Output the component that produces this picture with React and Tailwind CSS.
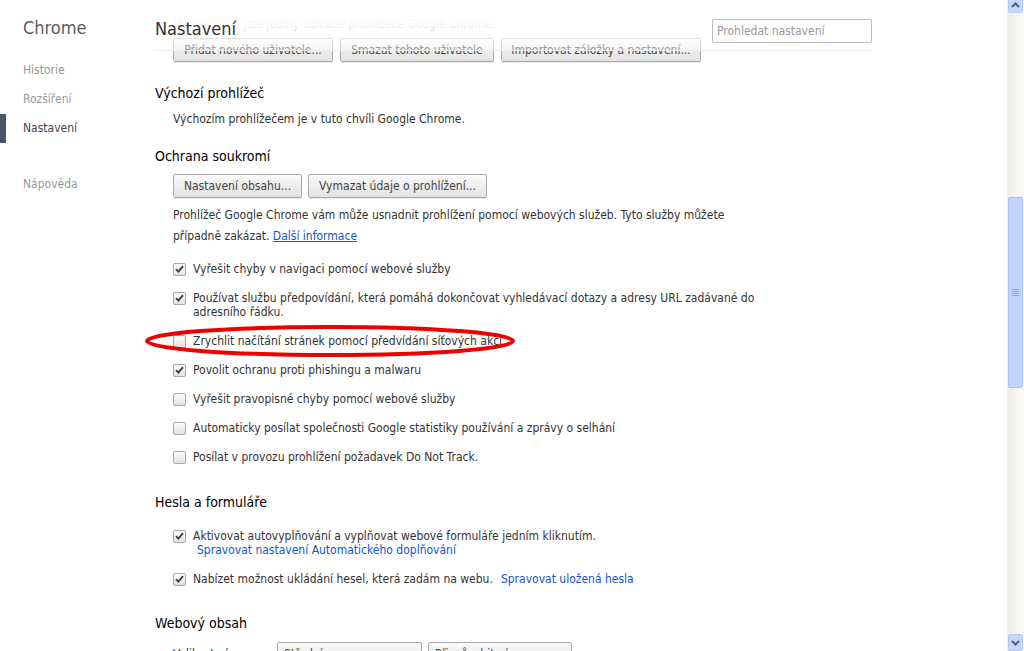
import React from "react";

const font = { fontFamily: '"DejaVu Sans Condensed", "DejaVu Sans", Tahoma, sans-serif' };

function Check({ checked }) {
  return (
    <span className="mt-[1px] flex h-[13px] w-[13px] shrink-0 items-center justify-center rounded-[2px] border border-[#a8a8a8] bg-gradient-to-b from-[#fdfdfd] to-[#e2e2e2]">
      {checked ? (
        <svg width="9" height="8" viewBox="0 0 9 8">
          <path d="M1 4.2 L3.4 6.6 L8 1.2" fill="none" stroke="#3c3c3c" strokeWidth="1.9" />
        </svg>
      ) : null}
    </span>
  );
}

function Btn({ children, className = "" }) {
  return (
    <button className={`h-[24px] whitespace-nowrap rounded-[2px] border border-[#aaaaaa] bg-gradient-to-b from-[#fafafa] to-[#e2e2e2] px-[6px] text-[12px] text-[#444] shadow-[0_1px_0_rgba(0,0,0,0.08)] ${className}`}>
      {children}
    </button>
  );
}

function Row({ checked, children }) {
  return (
    <div className="flex items-start gap-[7px] py-[7.5px] pl-[18px]">
      <Check checked={checked} />
      <div className="w-[570px] text-[12px] leading-[14px] text-[#333]">{children}</div>
    </div>
  );
}

function Heading({ children, className = "" }) {
  return <div className={`h-[20px] text-[14px] leading-[20px] text-[#000] ${className}`}>{children}</div>;
}

export default function App() {
  return (
    <div className="relative flex h-[651px] w-[1024px] overflow-hidden bg-white" style={font}>
      {/* sidebar */}
      <div className="relative w-[155px] shrink-0">
        <div className="pl-[23px] pt-[16px] text-[18px] leading-[24px] text-[#5a5a5a]">Chrome</div>
        <div className="mt-[16px] flex flex-col text-[12px] text-[#999]">
          <div className="h-[29px] pl-[23px] leading-[29px]">Historie</div>
          <div className="h-[29px] pl-[23px] leading-[29px]">Rozšíření</div>
          <div className="relative h-[29px] pl-[23px] leading-[29px] text-[#444]">
            <span className="absolute left-0 top-0 h-[29px] w-[6px] bg-[#4a5565]" />
            Nastavení
          </div>
          <div className="mt-[27px] h-[29px] pl-[23px] leading-[29px]">Nápověda</div>
        </div>
      </div>

      {/* main */}
      <div className="relative flex-1">
        <div className="flex flex-col">
          <div className="pl-[18px] pt-[14px] text-[12px] leading-[20px] text-[#333]">
            Momentálně jste jediný uživatel prohlížeče Google Chrome.
          </div>
          <div className="mt-[4px] flex gap-[7px] pl-[18px]">
            <Btn className="h-[23px] w-[160px]">Přidat nového uživatele...</Btn>
            <Btn className="h-[23px] w-[154px]">Smazat tohoto uživatele</Btn>
            <Btn className="h-[23px] w-[200px]">Importovat záložky a nastavení...</Btn>
          </div>

          <Heading className="mt-[21px]">Výchozí prohlížeč</Heading>
          <div className="mt-[6px] h-[20px] pl-[18px] text-[12px] leading-[20px] text-[#333]">
            Výchozím prohlížečem je v tuto chvíli Google Chrome.
          </div>

          <Heading className="mt-[17px]">Ochrana soukromí</Heading>
          <div className="mt-[8px] flex gap-[6px] pl-[18px]">
            <Btn className="w-[129px]">Nastavení obsahu...</Btn>
            <Btn className="w-[179px]">Vymazat údaje o prohlížení...</Btn>
          </div>
          <div className="mt-[7px] w-[618px] pl-[18px] text-[12px] leading-[21px] text-[#333]">
            Prohlížeč Google Chrome vám může usnadnit prohlížení pomocí webových služeb. Tyto služby můžete
            případně zakázat.{" "}
            <a className="text-[#1155cc] underline">Další informace</a>
          </div>

          <div className="mt-[7px] flex flex-col">
            <Row checked>Vyřešit chyby v navigaci pomocí webové služby</Row>
            <Row checked>
              Používat službu předpovídání, která pomáhá dokončovat vyhledávací dotazy a adresy URL zadávané do
              adresního řádku.
            </Row>
            <Row>Zrychlit načítání stránek pomocí předvídání síťových akcí</Row>
            <Row checked>Povolit ochranu proti phishingu a malwaru</Row>
            <Row>Vyřešit pravopisné chyby pomocí webové služby</Row>
            <Row>Automaticky posílat společnosti Google statistiky používání a zprávy o selhání</Row>
            <Row>Posílat v provozu prohlížení požadavek Do Not Track.</Row>
          </div>

          <Heading className="mt-[21px]">Hesla a formuláře</Heading>
          <div className="mt-[9px] flex flex-col">
            <Row checked>
              Aktivovat autovyplňování a vyplňovat webové formuláře jedním kliknutím.
              <div className="pl-[4px] text-[#1155cc]">Spravovat nastavení Automatického doplňování</div>
            </Row>
            <Row checked>
              Nabízet možnost ukládání hesel, která zadám na webu.
              <span className="ml-[8px] text-[#1155cc]">Spravovat uložená hesla</span>
            </Row>
          </div>

          <Heading className="mt-[20px]">Webový obsah</Heading>
          <div className="mt-[9px] flex items-center pl-[18px]">
            <div className="w-[104px] text-[12px] leading-[24px] text-[#333]">Velikost písma:</div>
            <Btn className="w-[145px] text-left">Střední</Btn>
            <Btn className="ml-[6px] w-[144px] text-left">Přizpůsobit písma...</Btn>
          </div>
        </div>

        {/* red ellipse annotation */}
        <svg className="pointer-events-none absolute left-[-12px] top-[324px]" width="374" height="34" viewBox="0 0 374 34">
          <ellipse cx="187" cy="17" rx="183" ry="14" fill="none" stroke="#ee0000" strokeWidth="4" />
        </svg>

        {/* fixed header overlay */}
        <div className="absolute left-0 top-0 h-[51px] w-[717px] border-b border-[#eeeeee] bg-gradient-to-b from-white via-white/95 to-white/40">
          <div className="flex items-center justify-between pt-[15px]">
            <div className="text-[18px] leading-[24px] text-[#333]">Nastavení</div>
            <div className="mt-[4px] flex h-[24px] w-[160px] items-center rounded-[2px] border border-[#bbbbbb] bg-white pl-[4px] text-[12px] text-[#999]">
              Prohledat nastavení
            </div>
          </div>
        </div>
      </div>

      {/* scrollbar */}
      <div className="flex w-[17px] shrink-0 flex-col bg-gradient-to-r from-[#eeede5] to-[#fbfbf9]">
        <div className="mx-[1px] -mt-[4px] flex h-[17px] items-center justify-center rounded-[2px] border border-[#b6c8f2] bg-[#c6d6fc]">
          <svg width="9" height="6" viewBox="0 0 9 6">
            <path d="M1 5 L4.5 1.5 L8 5" fill="none" stroke="#4d6185" strokeWidth="2" />
          </svg>
        </div>
        <div className="mx-[1px] mt-[184px] flex h-[191px] items-center justify-center rounded-[2px] border border-[#afc3f3] bg-[#c3d3fd]">
          <div className="flex flex-col gap-[1px]">
            <span className="h-[1px] w-[7px] bg-[#8fa9ee]" />
            <span className="h-[1px] w-[7px] bg-[#8fa9ee]" />
            <span className="h-[1px] w-[7px] bg-[#8fa9ee]" />
            <span className="h-[1px] w-[7px] bg-[#8fa9ee]" />
          </div>
        </div>
        <div className="flex-1" />
        <div className="mx-[1px] flex h-[17px] items-center justify-center rounded-[2px] border border-[#b6c8f2] bg-[#c6d6fc]">
          <svg width="9" height="6" viewBox="0 0 9 6">
            <path d="M1 1 L4.5 4.5 L8 1" fill="none" stroke="#4d6185" strokeWidth="2" />
          </svg>
        </div>
      </div>
    </div>
  );
}
